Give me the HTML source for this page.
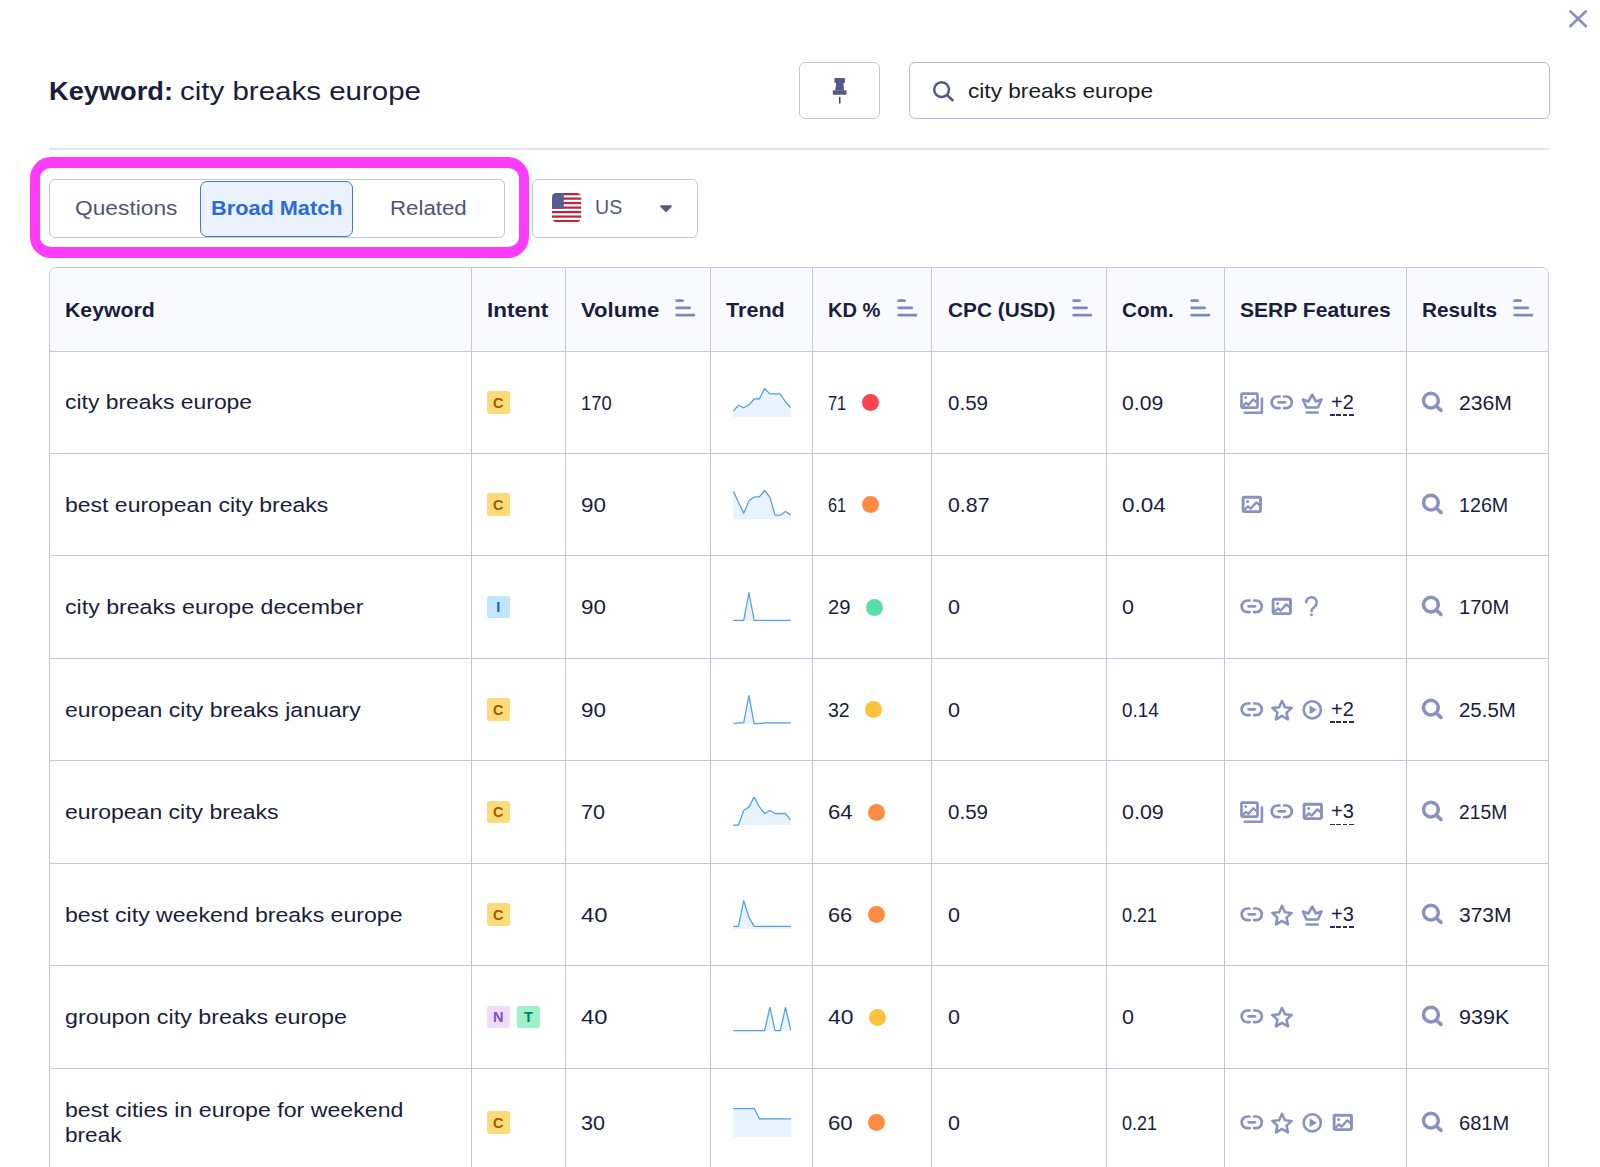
<!DOCTYPE html>
<html lang="en"><head><meta charset="utf-8"><title>Keyword: city breaks europe</title>
<style>
*{box-sizing:border-box}
html,body{margin:0;padding:0}
body{width:1600px;height:1167px;background:#fff}
#app{width:1600px;height:1167px;overflow:hidden;background:#fff;font-family:'Liberation Sans', sans-serif;color:#1a1e3c;font-size:20.5px;position:relative}
.abs{position:absolute}
.t{display:inline-block;white-space:pre;line-height:24px;height:24px;flex:none}
.t>span{display:inline-block;transform-origin:0 50%;white-space:pre}
.close{left:1566px;top:7px}
.title{left:49px;top:73px;height:36px;display:flex;align-items:center;gap:7px}
.title .t{line-height:36px;height:36px}
.pin{left:799px;top:62px;width:81px;height:57px;border:1px solid #c4c8dc;border-radius:6px;background:#fff}
.search{left:909px;top:62px;width:641px;height:57px;border:1px solid #b9bed9;border-radius:6px;background:#fff}
.search .q{position:absolute;left:58px;top:15.5px;color:#191b23}
.hr{left:49px;top:148px;width:1500px;height:2px;background:#e2e5eb}
.hl{left:30px;top:157px;width:498.5px;height:101px;border:solid #fc3cfa;border-width:11px 10px;border-radius:21px}
.tabs{left:49px;top:179px;width:456px;height:59px;border:1px solid #c2c6d8;border-radius:6px;background:#fff}
.tab{position:absolute;top:16px;color:#4f5675}
.tab.on{left:150px;top:1px;width:153px;height:56px;border:1px solid #3f7bd6;border-radius:7px;background:#eaf2fd;color:#2b6cd4}
.us{left:532px;top:179px;width:166px;height:59px;border:1px solid #c4c8dc;border-radius:6px;background:#fff}
.tbl{left:49px;top:267px;width:1500px;height:920px;border:1px solid #c3c8df;border-radius:7px;overflow:hidden;background:#fff}
.tr{display:flex;border-bottom:1px solid #c3c8df;width:1500px}
.th{background:#f9faff}
.td{flex:none;display:flex;align-items:center;padding-left:15px;border-right:1px solid #c3c8df;height:100%;position:relative}
.c1{width:422px}.c2{width:94px}.c3{width:145px}.c4{width:102px}.c5{width:119px}.c6{width:175px;padding-left:16px}.c7{width:118px}.c8{width:182px}.c9{width:141px;border-right:none}
.sort{margin-left:16.1px;position:relative;top:-1.2px;flex:none}
.kw{line-height:24.5px}
.kw .t{line-height:24.5px;height:24.5px;display:block}
.bdg{display:inline-flex;align-items:center;justify-content:center;width:22.5px;height:22.5px;border-radius:2.8px;font-size:14.5px;font-weight:700;margin-right:7.8px;flex:none;position:relative;left:0px}
.dot{width:17px;height:17px;border-radius:50%;margin-left:15.5px;flex:none}
.spark{position:relative;left:6.75px;top:0.6px;flex:none}
.si{flex:none;margin-right:6.5px;position:relative;left:-0.5px}
.more{display:inline-flex;border-bottom:none;position:relative;left:-1px;top:-0.7px}
.more:after{content:"";position:absolute;left:-0.5px;width:23.5px;bottom:-2.1px;height:1.6px;background:repeating-linear-gradient(90deg,#2b2f4b 0 4.6px,transparent 4.6px 6.3px)}
.rs{flex:none;margin-right:12.5px;position:relative;left:-2px}
</style></head>
<body>
<div id="app">
<svg class="abs close" width="24" height="24" viewBox="0 0 24 24"><path d="M4.5 4.5L19.7 19M19.7 4.5L4.5 19" stroke="#8d92ba" stroke-width="2.8" stroke-linecap="round"/></svg>
<div class="abs title"><span class="t" style="width:124px;font-size:26.5px;font-weight:700;"><span style="transform:scaleX(1.0269)">Keyword:</span></span><span class="t" style="width:241px;font-size:26.5px;"><span style="transform:scaleX(1.1130)">city breaks europe</span></span></div>
<div class="abs pin"><svg class="abs" style="left:32px;top:15px" width="17" height="27" viewBox="0 0 17 27"><g fill="#4f5a86"><rect x="2.4" y="0.1" width="10.6" height="4.8" rx="1"/><path d="M4.25 4.5H11.4L12.1 12.4H3.2z"/><rect x="0.8" y="12.2" width="13.7" height="4.65" rx="0.9"/></g><path d="M7.75 19.5V25" stroke="#3c4056" stroke-width="1.5" stroke-linecap="round"/></svg></div>
<div class="abs search"><svg class="abs" style="left:20px;top:15px" width="28" height="28" viewBox="0 0 28 28"><circle cx="11.6" cy="11.6" r="7.4" fill="none" stroke="#555b80" stroke-width="2.5"/><path d="M17.2 17.2L22.6 22.2" stroke="#555b80" stroke-width="2.6" stroke-linecap="round"/></svg><div class="q"><span class="t" style="width:185px;font-size:20.2px;"><span style="transform:scaleX(1.1215)">city breaks europe</span></span></div></div>
<div class="abs hr"></div>
<div class="abs tabs" role="tablist">
  <div class="tab" role="tab" style="left:25.4px"><span class="t" style="width:102.5px;font-size:20px;"><span style="transform:scaleX(1.1381)">Questions</span></span></div>
  <div class="tab on" role="tab" aria-selected="true"><div style="position:absolute;left:10.2px;top:14px"><span class="t" style="width:131.5px;font-size:20px;font-weight:700;"><span style="transform:scaleX(1.0857)">Broad Match</span></span></div></div>
  <div class="tab" role="tab" style="left:339.5px"><span class="t" style="width:76.7px;font-size:20px;"><span style="transform:scaleX(1.1126)">Related</span></span></div>
</div>
<div class="abs hl"></div>
<div class="abs us"><svg class="abs" style="left:19.2px;top:12.8px" width="30" height="30" viewBox="0 0 30 30"><defs><clipPath id="fc"><rect x="0" y="0" width="29.2" height="29.2" rx="4.6"/></clipPath></defs><g clip-path="url(#fc)"><rect width="30" height="30" fill="#fff"/><rect x="0" y="0.00" width="30" height="2.25" fill="#b9293b"/><rect x="0" y="4.49" width="30" height="2.25" fill="#b9293b"/><rect x="0" y="8.98" width="30" height="2.25" fill="#b9293b"/><rect x="0" y="13.48" width="30" height="2.25" fill="#b9293b"/><rect x="0" y="17.97" width="30" height="2.25" fill="#b9293b"/><rect x="0" y="22.46" width="30" height="2.25" fill="#b9293b"/><rect x="0" y="26.95" width="30" height="2.25" fill="#b9293b"/><rect x="0" y="0" width="11.8" height="15.7" fill="#555e8e"/></g></svg><div class="abs" style="left:61.6px;top:15px;color:#555b7c"><span class="t" style="width:27.2px;font-size:20px;"><span style="transform:scaleX(0.9785)">US</span></span></div><svg class="abs" style="left:125.5px;top:23.8px" width="14" height="10" viewBox="0 0 14 10"><path d="M2.2 2.2h9.6L7 7z" fill="#555c80" stroke="#555c80" stroke-width="2" stroke-linejoin="round"/></svg></div>
<div class="abs tbl" role="table">
<div class="tr th" role="row" style="height:84px"><div class="td c1"><span class="t" style="width:89.75px;font-weight:700;"><span style="transform:scaleX(1.0366)">Keyword</span></span></div><div class="td c2"><span class="t" style="width:61.25px;font-weight:700;"><span style="transform:scaleX(1.0977)">Intent</span></span></div><div class="td c3"><span class="t" style="width:78.25px;font-weight:700;"><span style="transform:scaleX(1.0788)">Volume</span></span><svg class="sort" width="21" height="18" viewBox="0 0 21 18"><g stroke="#8088ba" stroke-width="2.6" stroke-linecap="round" fill="none"><path d="M1.6 1.6H7.7"/><path d="M1.6 8.85H14.7"/><path d="M1.6 16.1H19"/></g></svg></div><div class="td c4"><span class="t" style="width:58.75px;font-weight:700;"><span style="transform:scaleX(1.0523)">Trend</span></span></div><div class="td c5"><span class="t" style="width:52.5px;font-weight:700;"><span style="transform:scaleX(0.9804)">KD %</span></span><svg class="sort" width="21" height="18" viewBox="0 0 21 18"><g stroke="#8088ba" stroke-width="2.6" stroke-linecap="round" fill="none"><path d="M1.6 1.6H7.7"/><path d="M1.6 8.85H14.7"/><path d="M1.6 16.1H19"/></g></svg></div><div class="td c6"><span class="t" style="width:107.5px;font-weight:700;"><span style="transform:scaleX(1.0149)">CPC (USD)</span></span><svg class="sort" width="21" height="18" viewBox="0 0 21 18"><g stroke="#8088ba" stroke-width="2.6" stroke-linecap="round" fill="none"><path d="M1.6 1.6H7.7"/><path d="M1.6 8.85H14.7"/><path d="M1.6 16.1H19"/></g></svg></div><div class="td c7"><span class="t" style="width:51.75px;font-weight:700;"><span style="transform:scaleX(1.0098)">Com.</span></span><svg class="sort" width="21" height="18" viewBox="0 0 21 18"><g stroke="#8088ba" stroke-width="2.6" stroke-linecap="round" fill="none"><path d="M1.6 1.6H7.7"/><path d="M1.6 8.85H14.7"/><path d="M1.6 16.1H19"/></g></svg></div><div class="td c8"><span class="t" style="width:150.75px;font-weight:700;"><span style="transform:scaleX(1.0282)">SERP Features</span></span></div><div class="td c9"><span class="t" style="width:75px;font-weight:700;"><span style="transform:scaleX(1.0127)">Results</span></span><svg class="sort" width="21" height="18" viewBox="0 0 21 18"><g stroke="#8088ba" stroke-width="2.6" stroke-linecap="round" fill="none"><path d="M1.6 1.6H7.7"/><path d="M1.6 8.85H14.7"/><path d="M1.6 16.1H19"/></g></svg></div></div>
<div class="tr" role="row" style="height:102px"><div class="td c1"><div class="kw"><span class="t" style="width:187.1px;"><span style="transform:scaleX(1.1169)">city breaks europe</span></span></div></div><div class="td c2"><span class="bdg" style="background:#fddb7b;color:#a45a00">C</span></div><div class="td c3"><span class="t" style="width:30.75px;"><span style="transform:scaleX(0.8986)">170</span></span></div><div class="td c4"><svg class="spark" width="58" height="31" viewBox="0 0 58 31"><polygon points="0.25,29.10 0.25,23.15 5.48,17.25 10.70,19.75 15.93,17.05 21.16,10.75 26.39,10.75 31.61,0.50 36.84,5.85 42.07,5.85 47.30,5.85 52.52,14.00 57.75,19.45 57.75,29.10" fill="#e9f3fd"/><polyline points="0.25,23.15 5.48,17.25 10.70,19.75 15.93,17.05 21.16,10.75 26.39,10.75 31.61,0.50 36.84,5.85 42.07,5.85 47.30,5.85 52.52,14.00 57.75,19.45" fill="none" stroke="#4da2e4" stroke-width="1.25" stroke-linejoin="round"/></svg></div><div class="td c5"><span class="t" style="width:18.25px;"><span style="transform:scaleX(0.8000)">71</span></span><span class="dot" style="background:#f9434f"></span></div><div class="td c6"><span class="t" style="width:40px;"><span style="transform:scaleX(1.0023)">0.59</span></span></div><div class="td c7"><span class="t" style="width:41.25px;"><span style="transform:scaleX(1.0337)">0.09</span></span></div><div class="td c8"><svg class="si" width="24" height="24" viewBox="0 0 24 24"><rect x="1.5" y="2.6" width="16" height="14" rx="1" fill="none" stroke="#8992bf" stroke-width="2.7"/><path d="M4.8 21.7H21.9V7.6" fill="none" stroke="#8992bf" stroke-width="2.6" stroke-linecap="round" stroke-linejoin="round"/><circle cx="5.7" cy="6.6" r="1.45" fill="#8992bf"/><path d="M2.8 14.8L6 11.9l2.3 2.1 5-5.7 3.2 2.8" fill="none" stroke="#8992bf" stroke-width="2.3" stroke-linejoin="round"/></svg><svg class="si" width="24" height="24" viewBox="0 0 24 24"><g stroke="#8992bf" stroke-width="2.7" stroke-linecap="round" fill="none"><path d="M9.6 5.5H7.5a5.85 5.85 0 0 0 0 11.7H9.6"/><path d="M14.1 5.5H16a5.85 5.85 0 0 1 0 11.7H14.1"/><path d="M8.6 11.35H14.9"/></g></svg><svg class="si" width="24" height="24" viewBox="0 0 24 24"><path d="M1.9 8.5L5.5 16.5H16.9L20.5 8.5L15 10.5L11.2 3.6L7.4 10.5Z" fill="none" stroke="#8992bf" stroke-width="2.6" stroke-linejoin="round"/><path d="M5.6 21.5H16.8" stroke="#8992bf" stroke-width="2.6" stroke-linecap="round"/></svg><span class="more"><span class="t" style="width:22.8px;font-size:19.6px;"><span style="transform:scaleX(1.0204)">+2</span></span></span></div><div class="td c9"><svg class="rs" width="24" height="24" viewBox="0 0 24 24"><circle cx="10.9" cy="9.6" r="7.4" fill="none" stroke="#8992bf" stroke-width="3.5"/><path d="M16.3 15.1L20.9 19.4" stroke="#8992bf" stroke-width="3.6" stroke-linecap="round"/></svg><span class="t" style="width:53px;"><span style="transform:scaleX(1.0335)">236M</span></span></div></div><div class="tr" role="row" style="height:102px"><div class="td c1"><div class="kw" style="position:relative;top:0.6px"><span class="t" style="width:263.3px;"><span style="transform:scaleX(1.1216)">best european city breaks</span></span></div></div><div class="td c2"><span class="bdg" style="background:#fddb7b;color:#a45a00">C</span></div><div class="td c3"><span class="t" style="width:25px;"><span style="transform:scaleX(1.0959)">90</span></span></div><div class="td c4"><svg class="spark" width="58" height="31" viewBox="0 0 58 31"><polygon points="0.25,29.10 0.25,1.10 5.48,12.20 10.70,23.30 15.93,10.80 21.16,6.95 26.39,6.95 31.61,0.50 36.84,7.10 42.07,25.20 47.30,25.20 52.52,21.45 57.75,24.90 57.75,29.10" fill="#e9f3fd"/><polyline points="0.25,1.10 5.48,12.20 10.70,23.30 15.93,10.80 21.16,6.95 26.39,6.95 31.61,0.50 36.84,7.10 42.07,25.20 47.30,25.20 52.52,21.45 57.75,24.90" fill="none" stroke="#4da2e4" stroke-width="1.25" stroke-linejoin="round"/></svg></div><div class="td c5"><span class="t" style="width:18.25px;"><span style="transform:scaleX(0.8000)">61</span></span><span class="dot" style="background:#ff8b43"></span></div><div class="td c6"><span class="t" style="width:41.5px;"><span style="transform:scaleX(1.0399)">0.87</span></span></div><div class="td c7"><span class="t" style="width:43.75px;"><span style="transform:scaleX(1.0963)">0.04</span></span></div><div class="td c8"><svg class="si" width="24" height="24" viewBox="0 0 24 24"><rect x="3.1" y="4.3" width="17.4" height="14.3" rx="1" fill="none" stroke="#8992bf" stroke-width="2.9"/><circle cx="7.6" cy="8.5" r="1.55" fill="#8992bf"/><path d="M4.2 17L8 13.3l2.5 2.4 5.8-6.3 3.9 3.3" fill="none" stroke="#8992bf" stroke-width="2.4" stroke-linejoin="round"/></svg></div><div class="td c9"><svg class="rs" width="24" height="24" viewBox="0 0 24 24"><circle cx="10.9" cy="9.6" r="7.4" fill="none" stroke="#8992bf" stroke-width="3.5"/><path d="M16.3 15.1L20.9 19.4" stroke="#8992bf" stroke-width="3.6" stroke-linecap="round"/></svg><span class="t" style="width:49.2px;"><span style="transform:scaleX(0.9594)">126M</span></span></div></div><div class="tr" role="row" style="height:103px"><div class="td c1"><div class="kw"><span class="t" style="width:298.4px;"><span style="transform:scaleX(1.1288)">city breaks europe december</span></span></div></div><div class="td c2"><span class="bdg" style="background:#c4e5fe;color:#0f67c4">I</span></div><div class="td c3"><span class="t" style="width:25px;"><span style="transform:scaleX(1.0959)">90</span></span></div><div class="td c4"><svg class="spark" width="58" height="31" viewBox="0 0 58 31"><polygon points="0.25,28.40 0.25,28.40 5.48,28.40 10.70,28.40 15.93,0.70 21.16,28.40 26.39,28.40 31.61,28.40 36.84,28.40 42.07,28.40 47.30,28.40 52.52,28.40 57.75,28.40 57.75,28.40" fill="#e9f3fd"/><polyline points="0.25,28.40 5.48,28.40 10.70,28.40 15.93,0.70 21.16,28.40 26.39,28.40 31.61,28.40 36.84,28.40 42.07,28.40 47.30,28.40 52.52,28.40 57.75,28.40" fill="none" stroke="#4da2e4" stroke-width="1.25" stroke-linejoin="round"/></svg></div><div class="td c5"><span class="t" style="width:22.5px;"><span style="transform:scaleX(0.9863)">29</span></span><span class="dot" style="background:#59ddaa"></span></div><div class="td c6"><span class="t" style="width:12px;"><span style="transform:scaleX(1.0521)">0</span></span></div><div class="td c7"><span class="t" style="width:12px;"><span style="transform:scaleX(1.0521)">0</span></span></div><div class="td c8"><svg class="si" width="24" height="24" viewBox="0 0 24 24"><g stroke="#8992bf" stroke-width="2.7" stroke-linecap="round" fill="none"><path d="M9.6 5.5H7.5a5.85 5.85 0 0 0 0 11.7H9.6"/><path d="M14.1 5.5H16a5.85 5.85 0 0 1 0 11.7H14.1"/><path d="M8.6 11.35H14.9"/></g></svg><svg class="si" width="24" height="24" viewBox="0 0 24 24"><rect x="3.1" y="4.3" width="17.4" height="14.3" rx="1" fill="none" stroke="#8992bf" stroke-width="2.9"/><circle cx="7.6" cy="8.5" r="1.55" fill="#8992bf"/><path d="M4.2 17L8 13.3l2.5 2.4 5.8-6.3 3.9 3.3" fill="none" stroke="#8992bf" stroke-width="2.4" stroke-linejoin="round"/></svg><svg class="si" width="24" height="24" viewBox="0 0 24 24"><path d="M5.1 7.4a5.3 5.3 0 1 1 8.4 4.5c-1.9 1.4-3 2.2-3 4.1v.3" fill="none" stroke="#8992bf" stroke-width="2.4" stroke-linecap="round"/><circle cx="10.5" cy="19.9" r="1.45" fill="#8992bf"/></svg></div><div class="td c9"><svg class="rs" width="24" height="24" viewBox="0 0 24 24"><circle cx="10.9" cy="9.6" r="7.4" fill="none" stroke="#8992bf" stroke-width="3.5"/><path d="M16.3 15.1L20.9 19.4" stroke="#8992bf" stroke-width="3.6" stroke-linecap="round"/></svg><span class="t" style="width:50.3px;"><span style="transform:scaleX(0.9809)">170M</span></span></div></div><div class="tr" role="row" style="height:102px"><div class="td c1"><div class="kw" style="position:relative;top:0.6px"><span class="t" style="width:295.8px;"><span style="transform:scaleX(1.1236)">european city breaks january</span></span></div></div><div class="td c2"><span class="bdg" style="background:#fddb7b;color:#a45a00">C</span></div><div class="td c3"><span class="t" style="width:25px;"><span style="transform:scaleX(1.0959)">90</span></span></div><div class="td c4"><svg class="spark" width="58" height="31" viewBox="0 0 58 31"><polygon points="0.25,29.00 0.25,29.00 5.48,27.90 10.70,27.70 15.93,0.70 21.16,28.70 26.39,28.70 31.61,27.90 36.84,27.90 42.07,27.90 47.30,27.90 52.52,27.90 57.75,27.90 57.75,29.00" fill="#e9f3fd"/><polyline points="0.25,29.00 5.48,27.90 10.70,27.70 15.93,0.70 21.16,28.70 26.39,28.70 31.61,27.90 36.84,27.90 42.07,27.90 47.30,27.90 52.52,27.90 57.75,27.90" fill="none" stroke="#4da2e4" stroke-width="1.25" stroke-linejoin="round"/></svg></div><div class="td c5"><span class="t" style="width:21.75px;"><span style="transform:scaleX(0.9534)">32</span></span><span class="dot" style="background:#fdc23c"></span></div><div class="td c6"><span class="t" style="width:12px;"><span style="transform:scaleX(1.0521)">0</span></span></div><div class="td c7"><span class="t" style="width:36.75px;"><span style="transform:scaleX(0.9209)">0.14</span></span></div><div class="td c8"><svg class="si" width="24" height="24" viewBox="0 0 24 24"><g stroke="#8992bf" stroke-width="2.7" stroke-linecap="round" fill="none"><path d="M9.6 5.5H7.5a5.85 5.85 0 0 0 0 11.7H9.6"/><path d="M14.1 5.5H16a5.85 5.85 0 0 1 0 11.7H14.1"/><path d="M8.6 11.35H14.9"/></g></svg><svg class="si" width="24" height="24" viewBox="0 0 24 24"><path d="M12.00 2.84L14.82 9.21L21.72 9.94L16.55 14.59L18.01 21.38L12.00 17.88L5.99 21.38L7.45 14.59L2.28 9.94L9.18 9.21z" fill="none" stroke="#8992bf" stroke-width="2.5" stroke-linejoin="round"/></svg><svg class="si" width="24" height="24" viewBox="0 0 24 24"><circle cx="11.3" cy="11.8" r="8.6" fill="none" stroke="#8992bf" stroke-width="2.6"/><path d="M8.9 7.9l6.6 3.9-6.6 3.9z" fill="#8992bf" stroke="#8992bf" stroke-width="0.6" stroke-linejoin="round"/></svg><span class="more"><span class="t" style="width:22.8px;font-size:19.6px;"><span style="transform:scaleX(1.0204)">+2</span></span></span></div><div class="td c9"><svg class="rs" width="24" height="24" viewBox="0 0 24 24"><circle cx="10.9" cy="9.6" r="7.4" fill="none" stroke="#8992bf" stroke-width="3.5"/><path d="M16.3 15.1L20.9 19.4" stroke="#8992bf" stroke-width="3.6" stroke-linecap="round"/></svg><span class="t" style="width:56.8px;"><span style="transform:scaleX(0.9968)">25.5M</span></span></div></div><div class="tr" role="row" style="height:103px"><div class="td c1"><div class="kw"><span class="t" style="width:213.5px;"><span style="transform:scaleX(1.1218)">european city breaks</span></span></div></div><div class="td c2"><span class="bdg" style="background:#fddb7b;color:#a45a00">C</span></div><div class="td c3"><span class="t" style="width:24px;"><span style="transform:scaleX(1.0521)">70</span></span></div><div class="td c4"><svg class="spark" width="58" height="31" viewBox="0 0 58 31"><polygon points="0.25,28.10 0.25,28.08 5.48,28.08 10.70,13.47 15.93,10.13 21.16,-0.10 26.39,9.84 31.61,16.50 36.84,13.47 42.07,16.50 47.30,16.50 52.52,16.50 57.75,23.12 57.75,28.10" fill="#e9f3fd"/><polyline points="0.25,28.08 5.48,28.08 10.70,13.47 15.93,10.13 21.16,-0.10 26.39,9.84 31.61,16.50 36.84,13.47 42.07,16.50 47.30,16.50 52.52,16.50 57.75,23.12" fill="none" stroke="#4da2e4" stroke-width="1.25" stroke-linejoin="round"/></svg></div><div class="td c5"><span class="t" style="width:24.5px;"><span style="transform:scaleX(1.0740)">64</span></span><span class="dot" style="background:#ff8b43"></span></div><div class="td c6"><span class="t" style="width:40px;"><span style="transform:scaleX(1.0023)">0.59</span></span></div><div class="td c7"><span class="t" style="width:41.75px;"><span style="transform:scaleX(1.0462)">0.09</span></span></div><div class="td c8"><svg class="si" width="24" height="24" viewBox="0 0 24 24"><rect x="1.5" y="2.6" width="16" height="14" rx="1" fill="none" stroke="#8992bf" stroke-width="2.7"/><path d="M4.8 21.7H21.9V7.6" fill="none" stroke="#8992bf" stroke-width="2.6" stroke-linecap="round" stroke-linejoin="round"/><circle cx="5.7" cy="6.6" r="1.45" fill="#8992bf"/><path d="M2.8 14.8L6 11.9l2.3 2.1 5-5.7 3.2 2.8" fill="none" stroke="#8992bf" stroke-width="2.3" stroke-linejoin="round"/></svg><svg class="si" width="24" height="24" viewBox="0 0 24 24"><g stroke="#8992bf" stroke-width="2.7" stroke-linecap="round" fill="none"><path d="M9.6 5.5H7.5a5.85 5.85 0 0 0 0 11.7H9.6"/><path d="M14.1 5.5H16a5.85 5.85 0 0 1 0 11.7H14.1"/><path d="M8.6 11.35H14.9"/></g></svg><svg class="si" width="24" height="24" viewBox="0 0 24 24"><rect x="3.1" y="4.3" width="17.4" height="14.3" rx="1" fill="none" stroke="#8992bf" stroke-width="2.9"/><circle cx="7.6" cy="8.5" r="1.55" fill="#8992bf"/><path d="M4.2 17L8 13.3l2.5 2.4 5.8-6.3 3.9 3.3" fill="none" stroke="#8992bf" stroke-width="2.4" stroke-linejoin="round"/></svg><span class="more"><span class="t" style="width:22.8px;font-size:19.6px;"><span style="transform:scaleX(1.0204)">+3</span></span></span></div><div class="td c9"><svg class="rs" width="24" height="24" viewBox="0 0 24 24"><circle cx="10.9" cy="9.6" r="7.4" fill="none" stroke="#8992bf" stroke-width="3.5"/><path d="M16.3 15.1L20.9 19.4" stroke="#8992bf" stroke-width="3.6" stroke-linecap="round"/></svg><span class="t" style="width:48.2px;"><span style="transform:scaleX(0.9399)">215M</span></span></div></div><div class="tr" role="row" style="height:102px"><div class="td c1"><div class="kw" style="position:relative;top:0.6px"><span class="t" style="width:337.5px;"><span style="transform:scaleX(1.1261)">best city weekend breaks europe</span></span></div></div><div class="td c2"><span class="bdg" style="background:#fddb7b;color:#a45a00">C</span></div><div class="td c3"><span class="t" style="width:26.5px;"><span style="transform:scaleX(1.1616)">40</span></span></div><div class="td c4"><svg class="spark" width="58" height="31" viewBox="0 0 58 31"><polygon points="0.25,29.10 0.25,26.40 5.48,26.40 10.70,0.80 15.93,17.40 21.16,26.40 26.39,26.40 31.61,26.40 36.84,26.40 42.07,26.40 47.30,26.40 52.52,26.40 57.75,26.40 57.75,29.10" fill="#e9f3fd"/><polyline points="0.25,26.40 5.48,26.40 10.70,0.80 15.93,17.40 21.16,26.40 26.39,26.40 31.61,26.40 36.84,26.40 42.07,26.40 47.30,26.40 52.52,26.40 57.75,26.40" fill="none" stroke="#4da2e4" stroke-width="1.25" stroke-linejoin="round"/></svg></div><div class="td c5"><span class="t" style="width:24.2px;"><span style="transform:scaleX(1.0608)">66</span></span><span class="dot" style="background:#ff8b43"></span></div><div class="td c6"><span class="t" style="width:12px;"><span style="transform:scaleX(1.0521)">0</span></span></div><div class="td c7"><span class="t" style="width:35px;"><span style="transform:scaleX(0.8771)">0.21</span></span></div><div class="td c8"><svg class="si" width="24" height="24" viewBox="0 0 24 24"><g stroke="#8992bf" stroke-width="2.7" stroke-linecap="round" fill="none"><path d="M9.6 5.5H7.5a5.85 5.85 0 0 0 0 11.7H9.6"/><path d="M14.1 5.5H16a5.85 5.85 0 0 1 0 11.7H14.1"/><path d="M8.6 11.35H14.9"/></g></svg><svg class="si" width="24" height="24" viewBox="0 0 24 24"><path d="M12.00 2.84L14.82 9.21L21.72 9.94L16.55 14.59L18.01 21.38L12.00 17.88L5.99 21.38L7.45 14.59L2.28 9.94L9.18 9.21z" fill="none" stroke="#8992bf" stroke-width="2.5" stroke-linejoin="round"/></svg><svg class="si" width="24" height="24" viewBox="0 0 24 24"><path d="M1.9 8.5L5.5 16.5H16.9L20.5 8.5L15 10.5L11.2 3.6L7.4 10.5Z" fill="none" stroke="#8992bf" stroke-width="2.6" stroke-linejoin="round"/><path d="M5.6 21.5H16.8" stroke="#8992bf" stroke-width="2.6" stroke-linecap="round"/></svg><span class="more"><span class="t" style="width:22.8px;font-size:19.6px;"><span style="transform:scaleX(1.0204)">+3</span></span></span></div><div class="td c9"><svg class="rs" width="24" height="24" viewBox="0 0 24 24"><circle cx="10.9" cy="9.6" r="7.4" fill="none" stroke="#8992bf" stroke-width="3.5"/><path d="M16.3 15.1L20.9 19.4" stroke="#8992bf" stroke-width="3.6" stroke-linecap="round"/></svg><span class="t" style="width:52.5px;"><span style="transform:scaleX(1.0238)">373M</span></span></div></div><div class="tr" role="row" style="height:103px"><div class="td c1"><div class="kw"><span class="t" style="width:282px;"><span style="transform:scaleX(1.1351)">groupon city breaks europe</span></span></div></div><div class="td c2"><span class="bdg" style="background:#eedcfb;color:#8549e0">N</span><span class="bdg" style="background:#9ef2c9;color:#007c65">T</span></div><div class="td c3"><span class="t" style="width:26.5px;"><span style="transform:scaleX(1.1616)">40</span></span></div><div class="td c4"><svg class="spark" width="58" height="31" viewBox="0 0 58 31"><polygon points="0.25,28.70 0.25,28.70 5.48,28.70 10.70,28.70 15.93,28.70 21.16,28.70 26.39,28.70 31.61,28.70 36.84,5.40 42.07,28.70 47.30,28.70 52.52,5.40 57.75,28.30 57.75,28.70" fill="#e9f3fd"/><polyline points="0.25,28.70 5.48,28.70 10.70,28.70 15.93,28.70 21.16,28.70 26.39,28.70 31.61,28.70 36.84,5.40 42.07,28.70 47.30,28.70 52.52,5.40 57.75,28.30" fill="none" stroke="#4da2e4" stroke-width="1.25" stroke-linejoin="round"/></svg></div><div class="td c5"><span class="t" style="width:25.5px;"><span style="transform:scaleX(1.1178)">40</span></span><span class="dot" style="background:#fdc23c"></span></div><div class="td c6"><span class="t" style="width:12px;"><span style="transform:scaleX(1.0521)">0</span></span></div><div class="td c7"><span class="t" style="width:12px;"><span style="transform:scaleX(1.0521)">0</span></span></div><div class="td c8"><svg class="si" width="24" height="24" viewBox="0 0 24 24"><g stroke="#8992bf" stroke-width="2.7" stroke-linecap="round" fill="none"><path d="M9.6 5.5H7.5a5.85 5.85 0 0 0 0 11.7H9.6"/><path d="M14.1 5.5H16a5.85 5.85 0 0 1 0 11.7H14.1"/><path d="M8.6 11.35H14.9"/></g></svg><svg class="si" width="24" height="24" viewBox="0 0 24 24"><path d="M12.00 2.84L14.82 9.21L21.72 9.94L16.55 14.59L18.01 21.38L12.00 17.88L5.99 21.38L7.45 14.59L2.28 9.94L9.18 9.21z" fill="none" stroke="#8992bf" stroke-width="2.5" stroke-linejoin="round"/></svg></div><div class="td c9"><svg class="rs" width="24" height="24" viewBox="0 0 24 24"><circle cx="10.9" cy="9.6" r="7.4" fill="none" stroke="#8992bf" stroke-width="3.5"/><path d="M16.3 15.1L20.9 19.4" stroke="#8992bf" stroke-width="3.6" stroke-linecap="round"/></svg><span class="t" style="width:50.3px;"><span style="transform:scaleX(1.0503)">939K</span></span></div></div><div class="tr" role="row" style="height:108px"><div class="td c1"><div class="kw"><span class="t" style="width:338.4px;"><span style="transform:scaleX(1.1291)">best cities in europe for weekend</span></span><span class="t" style="width:56.5px;"><span style="transform:scaleX(1.1018)">break</span></span></div></div><div class="td c2"><span class="bdg" style="background:#fddb7b;color:#a45a00">C</span></div><div class="td c3"><span class="t" style="width:24px;"><span style="transform:scaleX(1.0521)">30</span></span></div><div class="td c4"><svg class="spark" width="58" height="31" viewBox="0 0 58 31"><polygon points="0.25,29.10 0.25,0.50 5.48,0.50 10.70,0.50 15.93,0.50 21.16,0.50 26.39,10.80 31.61,10.80 36.84,10.80 42.07,10.80 47.30,10.80 52.52,10.80 57.75,10.80 57.75,29.10" fill="#e9f3fd"/><polyline points="0.25,0.50 5.48,0.50 10.70,0.50 15.93,0.50 21.16,0.50 26.39,10.80 31.61,10.80 36.84,10.80 42.07,10.80 47.30,10.80 52.52,10.80 57.75,10.80" fill="none" stroke="#4da2e4" stroke-width="1.25" stroke-linejoin="round"/></svg></div><div class="td c5"><span class="t" style="width:24.7px;"><span style="transform:scaleX(1.0827)">60</span></span><span class="dot" style="background:#ff8b43"></span></div><div class="td c6"><span class="t" style="width:12px;"><span style="transform:scaleX(1.0521)">0</span></span></div><div class="td c7"><span class="t" style="width:35px;"><span style="transform:scaleX(0.8771)">0.21</span></span></div><div class="td c8"><svg class="si" width="24" height="24" viewBox="0 0 24 24"><g stroke="#8992bf" stroke-width="2.7" stroke-linecap="round" fill="none"><path d="M9.6 5.5H7.5a5.85 5.85 0 0 0 0 11.7H9.6"/><path d="M14.1 5.5H16a5.85 5.85 0 0 1 0 11.7H14.1"/><path d="M8.6 11.35H14.9"/></g></svg><svg class="si" width="24" height="24" viewBox="0 0 24 24"><path d="M12.00 2.84L14.82 9.21L21.72 9.94L16.55 14.59L18.01 21.38L12.00 17.88L5.99 21.38L7.45 14.59L2.28 9.94L9.18 9.21z" fill="none" stroke="#8992bf" stroke-width="2.5" stroke-linejoin="round"/></svg><svg class="si" width="24" height="24" viewBox="0 0 24 24"><circle cx="11.3" cy="11.8" r="8.6" fill="none" stroke="#8992bf" stroke-width="2.6"/><path d="M8.9 7.9l6.6 3.9-6.6 3.9z" fill="#8992bf" stroke="#8992bf" stroke-width="0.6" stroke-linejoin="round"/></svg><svg class="si" width="24" height="24" viewBox="0 0 24 24"><rect x="3.1" y="4.3" width="17.4" height="14.3" rx="1" fill="none" stroke="#8992bf" stroke-width="2.9"/><circle cx="7.6" cy="8.5" r="1.55" fill="#8992bf"/><path d="M4.2 17L8 13.3l2.5 2.4 5.8-6.3 3.9 3.3" fill="none" stroke="#8992bf" stroke-width="2.4" stroke-linejoin="round"/></svg></div><div class="td c9"><svg class="rs" width="24" height="24" viewBox="0 0 24 24"><circle cx="10.9" cy="9.6" r="7.4" fill="none" stroke="#8992bf" stroke-width="3.5"/><path d="M16.3 15.1L20.9 19.4" stroke="#8992bf" stroke-width="3.6" stroke-linecap="round"/></svg><span class="t" style="width:50.3px;"><span style="transform:scaleX(0.9809)">681M</span></span></div></div>
</div>
</div>
</body></html>
